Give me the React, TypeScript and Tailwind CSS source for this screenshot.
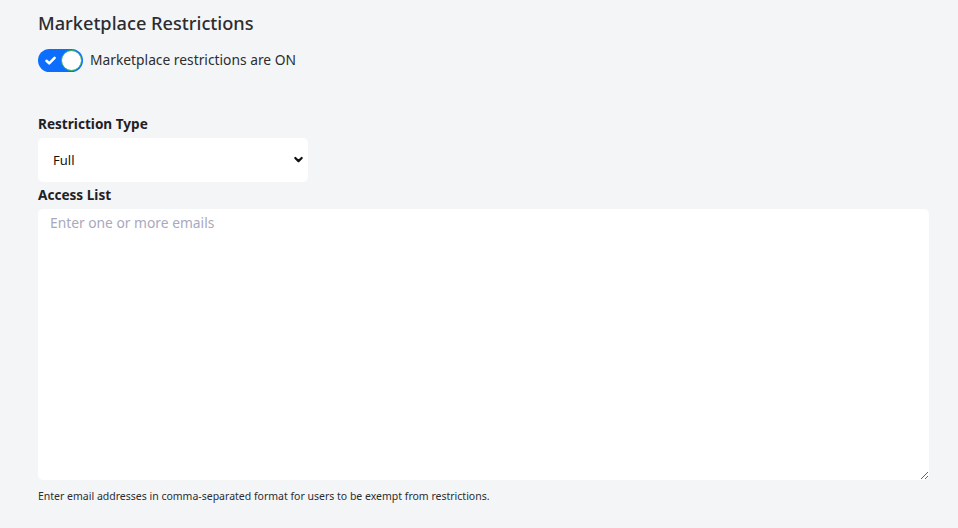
import { useState } from "react";

export default function App() {
  const [on, setOn] = useState(true);

  return (
    <div
      className="min-h-screen w-full bg-[#f4f5f7] px-[38px] pt-[11px] text-[#212529]"
      style={{ fontFamily: '"Noto Sans", "Open Sans", sans-serif' }}
    >
      <h1 className="text-[18.2px] font-medium leading-[24px] text-[#2b2d31]">
        Marketplace Restrictions
      </h1>

      <div className="mt-[14px] flex items-center gap-[7px]">
        <button
          onClick={() => setOn(!on)}
          className="relative h-[23px] w-[45px] rounded-full bg-[#0d6efd]"
        >
          <svg
            viewBox="0 0 12 12"
            className="absolute left-[6px] top-[5px] h-[13px] w-[13px]"
            fill="none"
            stroke="white"
            strokeWidth="2.4"
            strokeLinecap="round"
            strokeLinejoin="round"
          >
            <path d="M2.3 6.3l2.5 2.3L9.8 3.6" />
          </svg>
          <span className="absolute right-[1px] top-[1px] h-[21px] w-[21px] rounded-full border-[1.5px] border-[#2fb344] bg-white" />
        </button>
        <span className="text-[13.8px] text-[#2b2d31]">
          Marketplace restrictions are ON
        </span>
      </div>

      <div className="mt-[43px] text-[13.6px] font-bold leading-[18px] text-[#1f2125]">
        Restriction Type
      </div>
      <div className="relative mt-[5px] flex h-[44px] w-[270px] items-center rounded-[5px] bg-white pl-[15px] pt-[2px] text-[13px] text-[#111]">
        Full
        <svg
          viewBox="0 0 12 12"
          className="absolute right-[4px] top-[16px] h-[11px] w-[11px]"
          fill="none"
          stroke="#111"
          strokeWidth="2.4"
          strokeLinecap="round"
          strokeLinejoin="round"
        >
          <path d="M2.5 4.3L6 7.8l3.5-3.5" />
        </svg>
      </div>

      <div className="mt-[4px] text-[13.6px] font-bold leading-[18px] text-[#1f2125]">
        Access List
      </div>
      <textarea
        placeholder="Enter one or more emails"
        className="mt-[5px] block h-[271px] w-[891px] rounded-[5px] bg-white px-[12px] py-[4px] text-[13.8px] outline-none placeholder:text-[#a8a9bd]"
      />

      <p className="mt-[9px] text-[10.5px] text-[#2b2d31]">
        Enter email addresses in comma-separated format for users to be exempt
        from restrictions.
      </p>
    </div>
  );
}
